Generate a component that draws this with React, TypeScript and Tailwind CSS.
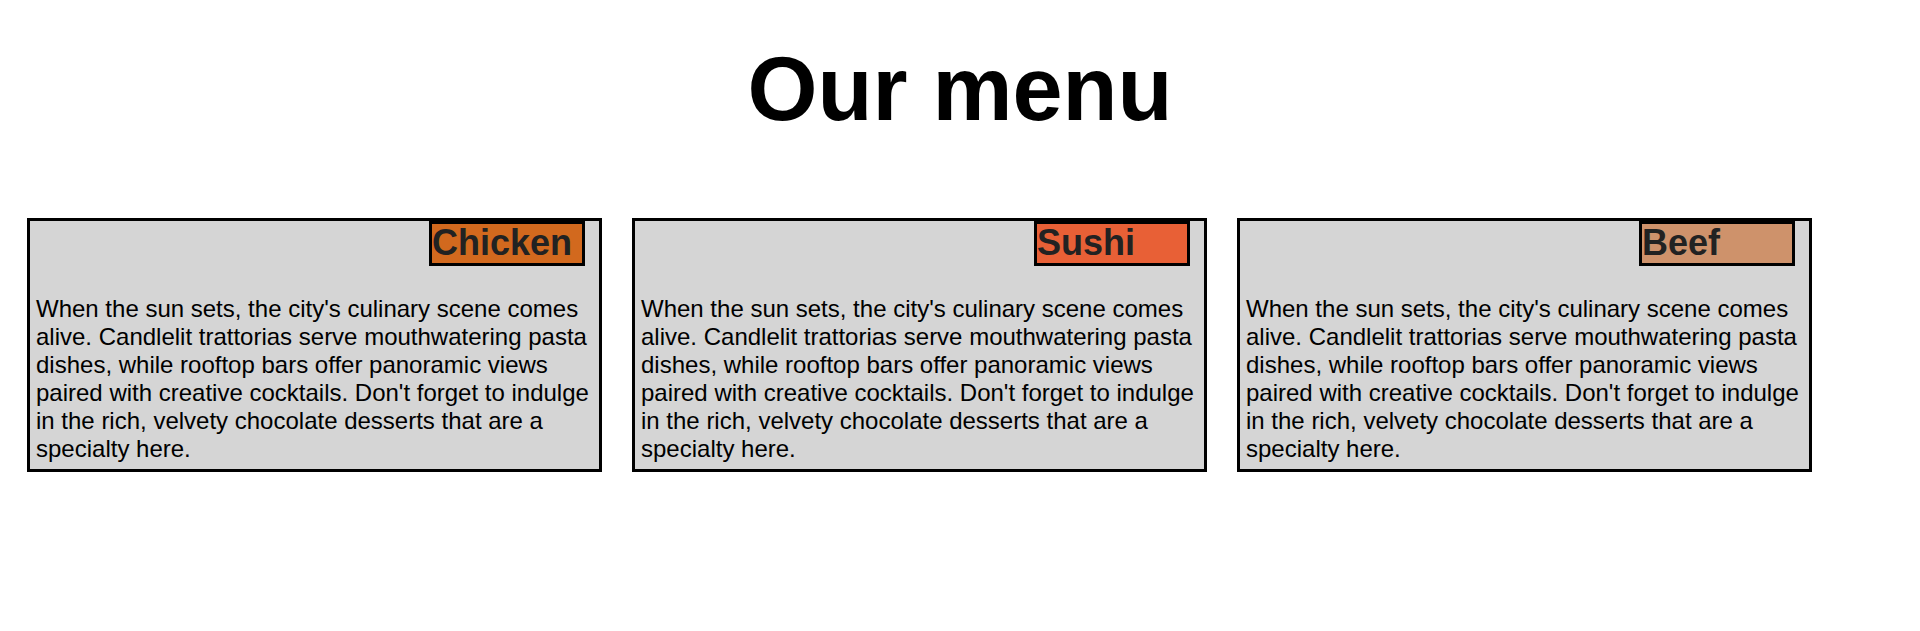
const dishes = [
  { name: 'Chicken', color: 'bg-[#d2691e]' },
  { name: 'Sushi', color: 'bg-[#e86036]' },
  { name: 'Beef', color: 'bg-[#ce926b]' },
];

const blurb =
  "When the sun sets, the city's culinary scene comes alive. Candlelit trattorias serve mouthwatering pasta dishes, while rooftop bars offer panoramic views paired with creative cocktails. Don't forget to indulge in the rich, velvety chocolate desserts that are a specialty here.";

export default function App() {
  return (
    <div className="min-h-screen bg-white font-['Liberation_Sans',Arial,sans-serif] text-black">
      <h1 className="pt-[38px] text-center text-[90px] font-bold leading-[normal]">Our menu</h1>

      <div className="mt-[77px] flex gap-[30px] pl-[27px]">
        {dishes.map((d) => (
          <div key={d.name} className="flex w-[575px] flex-col border-[3px] border-black bg-[#d5d5d5]">
            <div
              className={`mr-[14px] h-[45px] w-[156px] self-end border-[3px] border-black ${d.color} text-[36px] font-bold leading-[38px] text-[#222]`}
            >
              {d.name}
            </div>
            <p className="mt-[29px] px-[6px] pb-[6px] text-[24px] leading-[normal]">{blurb}</p>
          </div>
        ))}
      </div>
    </div>
  );
}
